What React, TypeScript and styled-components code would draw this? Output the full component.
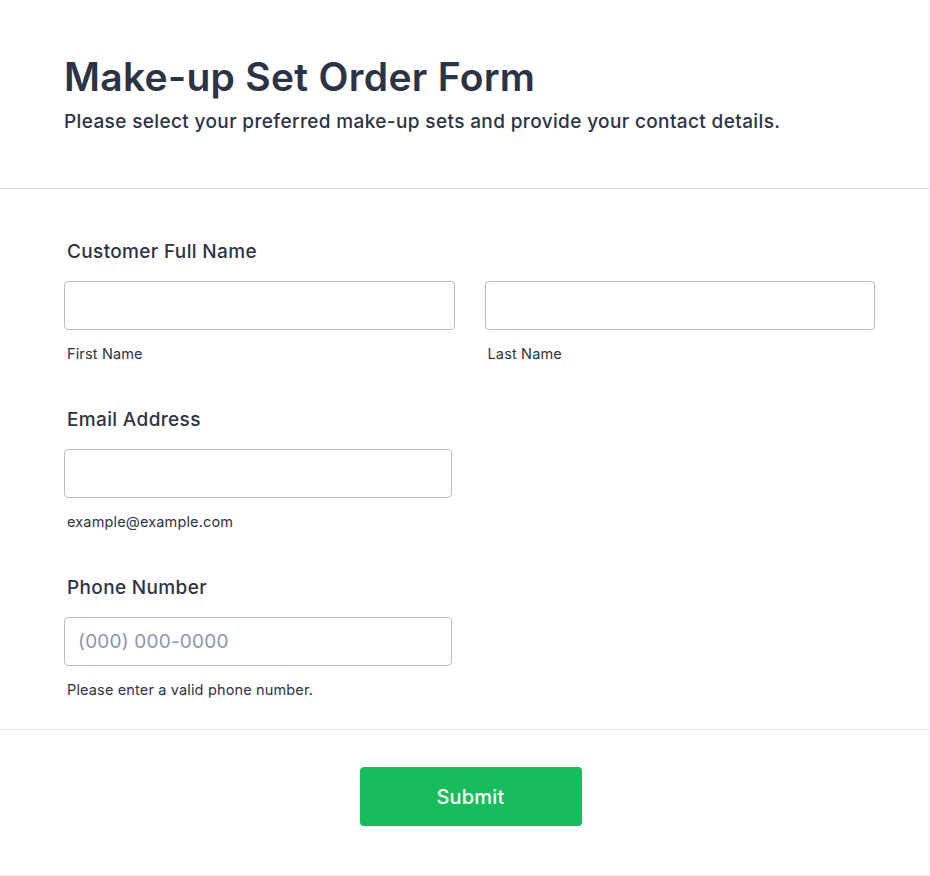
import React from "react";
import styled, { createGlobalStyle } from "styled-components";

const GlobalStyle = createGlobalStyle`
  html, body { margin: 0; padding: 0; background: #ffffff; }
  body { font-family: Inter, "Noto Sans", sans-serif; color: #2c3345; }
  * { box-sizing: border-box; }
`;

const Card = styled.div`
  width: 930px;
  height: 876px;
  background: #ffffff;
  border-right: 1px solid #eef0f6;
  border-bottom: 1px solid #eef0f6;
  display: flex;
  flex-direction: column;
`;

const Header = styled.header`
  padding: 54px 64px 0 64px;
  height: 189px;
  border-bottom: 1px solid #d8dae9;
`;

const Title = styled.h1`
  margin: 0;
  font-size: 39px;
  line-height: 46px;
  font-weight: 600;
  color: #2c3345;
  letter-spacing: 0.3px;
`;

const Subtitle = styled.p`
  margin: 11px 0 0 0;
  font-size: 19px;
  line-height: 22px;
  font-weight: 500;
  letter-spacing: 0.37px;
  color: #2c3345;
`;

const Body = styled.div`
  padding: 52px 54px 0 64px;
  height: 541px;
  border-bottom: 1px solid #e6e8f0;
  display: flex;
  flex-direction: column;
  gap: 47px;
`;

const Field = styled.div`
  display: flex;
  flex-direction: column;
`;

const Label = styled.label`
  display: block;
  margin: 0 0 18px 3px;
  font-size: 19px;
  line-height: 22px;
  font-weight: 500;
  letter-spacing: 0.35px;
  color: #2c3345;
`;

const Row = styled.div`
  display: grid;
  grid-template-columns: 1fr 1fr;
  column-gap: 30px;
`;

const Column = styled.div<{ $maxWidth?: number }>`
  display: flex;
  flex-direction: column;
  max-width: ${(p) => (p.$maxWidth ? `${p.$maxWidth}px` : "none")};
`;

const Input = styled.input`
  width: 100%;
  height: 49px;
  padding: 0 13px;
  border: 1px solid #b8bdc9;
  border-radius: 4px;
  background: #ffffff;
  font-family: Inter, "Noto Sans", sans-serif;
  font-size: 19px;
  letter-spacing: 0.2px;
  color: #2c3345;
  outline: none;
  &::placeholder {
    color: #8f94ab;
  }
`;

const SubLabel = styled.span`
  display: block;
  margin: 15px 0 0 3px;
  font-size: 14.5px;
  line-height: 17px;
  font-weight: 400;
  letter-spacing: 0.15px;
  color: #2c3345;
`;

const Footer = styled.div`
  padding-top: 37px;
  display: flex;
  justify-content: center;
`;

const SubmitButton = styled.button`
  width: 222px;
  height: 59px;
  margin-left: 12px;
  border: none;
  border-radius: 4px;
  background: #18bd5b;
  color: #ffffff;
  font-family: Inter, "Noto Sans", sans-serif;
  font-size: 20px;
  font-weight: 500;
  letter-spacing: 0.2px;
  cursor: pointer;
`;

export default function App() {
  return (
    <>
      <GlobalStyle />
      <Card>
        <Header>
          <Title>Make-up Set Order Form</Title>
          <Subtitle>
            Please select your preferred make-up sets and provide your contact details.
          </Subtitle>
        </Header>
        <Body>
          <Field>
            <Label>Customer Full Name</Label>
            <Row>
              <Column>
                <Input type="text" aria-label="First Name" />
                <SubLabel>First Name</SubLabel>
              </Column>
              <Column>
                <Input type="text" aria-label="Last Name" />
                <SubLabel>Last Name</SubLabel>
              </Column>
            </Row>
          </Field>
          <Field>
            <Label>Email Address</Label>
            <Column $maxWidth={388}>
              <Input type="email" aria-label="Email Address" />
              <SubLabel>example@example.com</SubLabel>
            </Column>
          </Field>
          <Field>
            <Label>Phone Number</Label>
            <Column $maxWidth={388}>
              <Input type="tel" placeholder="(000) 000-0000" aria-label="Phone Number" />
              <SubLabel>Please enter a valid phone number.</SubLabel>
            </Column>
          </Field>
        </Body>
        <Footer>
          <SubmitButton type="submit">Submit</SubmitButton>
        </Footer>
      </Card>
    </>
  );
}
